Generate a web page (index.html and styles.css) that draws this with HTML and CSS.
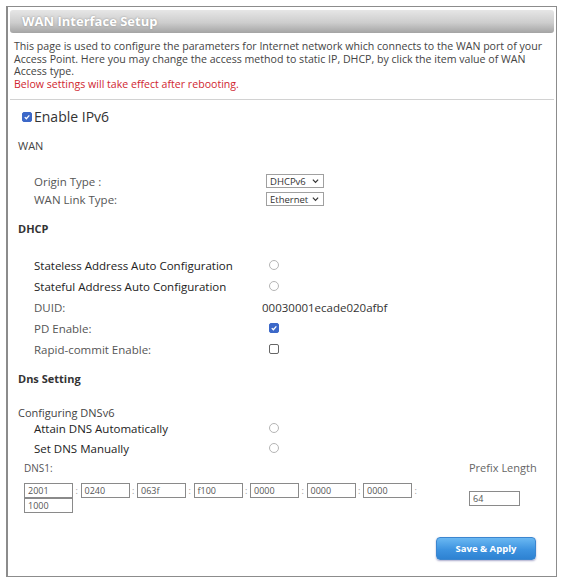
FILE: index.html
```html
<!DOCTYPE html>
<html>
<head>
<meta charset="utf-8">
<title>WAN Interface Setup</title>
<link rel="stylesheet" href="styles.css">
</head>
<body>
<div class="panel">
  <div class="title-bar">WAN Interface Setup</div>

  <div class="intro">
    <p>This page is used to configure the parameters for Internet network which connects to the WAN port of your Access Point. Here you may change the access method to static IP, DHCP, by click the item value of WAN Access type.</p>
    <p class="warn">Below settings will take effect after rebooting.</p>
  </div>
  <div class="sep"></div>

  <div class="enable"><span class="check on"><svg viewBox="0 0 10 10"><path d="M2.2 5.2 L4.2 7.2 L7.9 2.9" fill="none" stroke="#fff" stroke-width="1.6"/></svg></span>Enable IPv6</div>

  <div class="section wan-title">WAN</div>
  <div class="rows wan-rows">
    <div class="row"><span class="label light">Origin Type :</span><span class="select">DHCPv6<svg viewBox="0 0 8 6"><path d="M1 1.5 L4 4.5 L7 1.5" fill="none" stroke="#333" stroke-width="1.4"/></svg></span></div>
    <div class="row"><span class="label light">WAN Link Type:</span><span class="select">Ethernet<svg viewBox="0 0 8 6"><path d="M1 1.5 L4 4.5 L7 1.5" fill="none" stroke="#333" stroke-width="1.4"/></svg></span></div>
  </div>

  <div class="section bold dhcp-title">DHCP</div>
  <div class="rows dhcp-rows">
    <div class="row tall"><span class="label">Stateless Address Auto Configuration</span><span class="radio"></span></div>
    <div class="row tall"><span class="label">Stateful Address Auto Configuration</span><span class="radio"></span></div>
    <div class="row tall"><span class="label light">DUID:</span><span class="value">00030001ecade020afbf</span></div>
    <div class="row tall"><span class="label light">PD Enable:</span><span class="check on"><svg viewBox="0 0 10 10"><path d="M2.2 5.2 L4.2 7.2 L7.9 2.9" fill="none" stroke="#fff" stroke-width="1.6"/></svg></span></div>
    <div class="row tall"><span class="label light">Rapid-commit Enable:</span><span class="check"></span></div>
  </div>

  <div class="section bold dns-title">Dns Setting</div>
  <div class="section config-title">Configuring DNSv6</div>
  <div class="rows">
    <div class="row mid"><span class="label">Attain DNS Automatically</span><span class="radio"></span></div>
    <div class="row mid"><span class="label">Set DNS Manually</span><span class="radio"></span></div>
  </div>

  <div class="dns">
    <div class="dns-left">
      <div class="dns-label">DNS1:</div>
      <div class="addr">
        <span class="field">2001</span><span class="colon">:</span>
        <span class="field">0240</span><span class="colon">:</span>
        <span class="field">063f</span><span class="colon">:</span>
        <span class="field">f100</span><span class="colon">:</span>
        <span class="field">0000</span><span class="colon">:</span>
        <span class="field">0000</span><span class="colon">:</span>
        <span class="field">0000</span><span class="colon">:</span>
        <span class="field">1000</span>
      </div>
    </div>
    <div class="dns-right">
      <div class="prefix-label">Prefix Length</div>
      <span class="field prefix">64</span>
    </div>
  </div>

  <div class="actions"><button class="apply">Save &amp; Apply</button></div>
</div>
</body>
</html>
```

FILE: styles.css
```css
* {
  box-sizing: border-box;
  font-family: "Open Sans", "DejaVu Sans", sans-serif;
}
body {
  margin: 0;
  background: #fff;
  color: #333;
}
.panel {
  margin: 6px 0 0 6px;
  width: 551px;
  height: 571px;
  border: 1px solid #8c8c8c;
  border-left: 2px solid #8c8c8c;
  padding: 3px 2px 0 2px;
}
.title-bar {
  height: 23px;
  border-radius: 3px;
  background: linear-gradient(to bottom, #e6e6e6 0, #cdcdcd 55%, #a4a4a4 100%);
  color: #fff;
  font-size: 13px;
  font-weight: bold;
  line-height: 23px;
  padding-left: 12px;
  text-shadow: 0 0 2px #8a8a8a;
}
.intro {
  margin-top: 7px;
  padding: 0 0 0 4px;
  font-size: 10.6px;
  line-height: 12.5px;
  color: #444;
}
.intro p {
  margin: 0;
}
.intro .warn {
  color: #d0262f;
}
.sep {
  margin-top: 9px;
  height: 1px;
  background: #d2d2d2;
}
.enable {
  margin-top: 8px;
  height: 18px;
  line-height: 18px;
  padding-left: 12px;
  font-size: 14px;
  color: #333;
  display: flex;
  align-items: center;
}
.enable .check {
  margin: 0 2px 0 0;
}
.section {
  height: 14px;
  line-height: 14px;
  padding-left: 8px;
  font-size: 11px;
  color: #444;
}
.section.bold {
  font-weight: bold;
  color: #333;
}
.wan-title {
  margin-top: 13px;
}
.wan-rows {
  margin-top: 19px;
}
.dhcp-title {
  margin-top: 14px;
}
.dhcp-rows {
  margin-top: 18.5px;
}
.dns-title {
  margin-top: 12.5px;
}
.config-title {
  margin-top: 22px;
  height: 10px;
  line-height: 10px;
}
.row {
  display: flex;
  align-items: center;
  height: 18px;
  padding-left: 24px;
  font-size: 11.5px;
}
.row.tall {
  height: 21px;
}
.row.mid {
  height: 20px;
}
.label {
  width: 232px;
  color: #222;
}
.label.light {
  color: #555;
}
.value {
  margin-left: -4px;
  color: #333;
}
.select {
  display: inline-flex;
  align-items: center;
  justify-content: space-between;
  width: 58px;
  height: 14px;
  padding: 0 4px 0 3px;
  border: 1px solid #a0a0a0;
  font-size: 9.5px;
  color: #333;
}
.select svg {
  width: 7px;
  height: 6px;
}
.radio {
  width: 10px;
  height: 10px;
  margin-left: 3px;
  border: 1px solid #b5b5b5;
  border-radius: 50%;
}
.check {
  display: inline-block;
  width: 10px;
  height: 10px;
  margin-left: 3px;
  border: 1px solid #666;
  border-radius: 2px;
}
.check.on {
  background: #3c68c8;
  border-color: #3c68c8;
}
.check svg {
  display: block;
  width: 8px;
  height: 8px;
}
.dns {
  display: flex;
  margin-top: 3px;
  padding-left: 14px;
}
.dns-left {
  width: 400px;
}
.dns-label {
  height: 14px;
  line-height: 14px;
  font-size: 10px;
  color: #555;
}
.addr {
  display: flex;
  flex-wrap: wrap;
  width: 398px;
  margin-top: 8px;
}
.field {
  display: inline-block;
  width: 49px;
  height: 15px;
  line-height: 13px;
  padding-left: 3px;
  border: 1px solid #8a8a8a;
  font-size: 9px;
  color: #555;
}
.colon {
  width: 7.5px;
  text-align: center;
  font-size: 9px;
  line-height: 15px;
  color: #999;
}
.dns-right {
  margin-left: 45px;
}
.prefix-label {
  height: 14px;
  line-height: 14px;
  font-size: 11px;
  color: #666;
}
.field.prefix {
  margin-top: 16px;
  width: 51px;
}
.actions {
  display: flex;
  justify-content: flex-end;
  margin-top: 24px;
  padding-right: 18px;
}
.apply {
  width: 100px;
  height: 23px;
  border: 1px solid #3b86cf;
  border-radius: 4px;
  background: linear-gradient(to bottom, #6ab8f2 0, #3d93e0 55%, #2e82d2 100%);
  color: #fff;
  font-size: 9.5px;
  font-weight: bold;
  box-shadow: 0 1px 2px #aac;
}
```
